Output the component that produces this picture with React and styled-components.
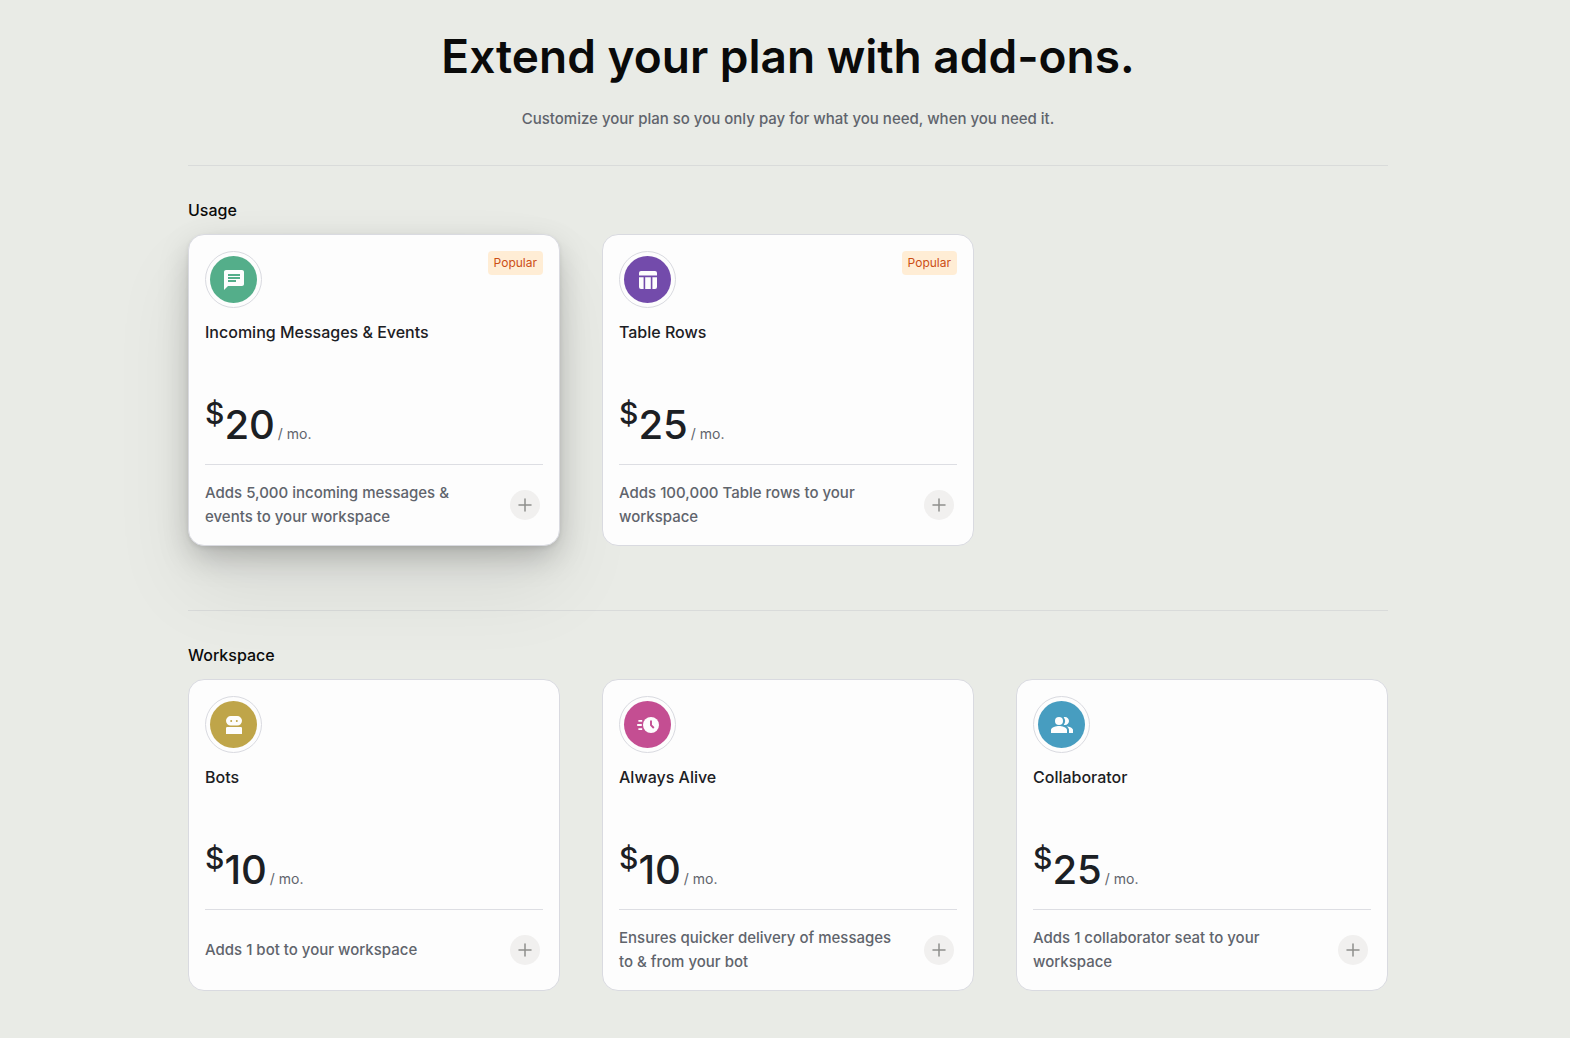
import React from 'react';
import styled, { createGlobalStyle } from 'styled-components';
import { MdChat, MdPeopleAlt } from 'react-icons/md';

const GlobalStyle = createGlobalStyle`
  *, *::before, *::after {
    box-sizing: border-box;
  }
  body {
    margin: 0;
    background: #e9ebe6;
    color: #0a0a0a;
    font-family: Inter, "Liberation Sans", sans-serif;
    font-size: 15px;
    line-height: 24px;
    -webkit-font-smoothing: antialiased;
  }
  h1, h2, h3, p, ul {
    margin: 0;
    padding: 0;
  }
`;

// ========== Icons ========================
const TableIcon = () => (
  <svg viewBox='0 0 24 24' width='24' height='24' fill='currentColor' aria-hidden='true'>
    <path d='M5 3h14a2 2 0 0 1 2 2v2.6H3V5a2 2 0 0 1 2-2z' />
    <path d='M3 9.3h4.6V21H5a2 2 0 0 1-2-2zM9.2 9.3h5.6V21H9.2zM16.4 9.3H21V19a2 2 0 0 1-2 2h-2.6z' />
  </svg>
);

const BotIcon = () => (
  <svg viewBox='0 0 24 24' width='24' height='24' fill='currentColor' aria-hidden='true'>
    <path
      fillRule='evenodd'
      d='M8.8 3h6.4a4.8 4.8 0 0 1 0 9.6H8.8a4.8 4.8 0 0 1 0-9.6zM9.2 6.9a1 1 0 1 0 0 2 1 1 0 0 0 0-2zm5.6 0a1 1 0 1 0 0 2 1 1 0 0 0 0-2z'
    />
    <path d='M5.2 14h13.6a1.2 1.2 0 0 1 1.2 1.2V21H4v-5.8A1.2 1.2 0 0 1 5.2 14z' />
  </svg>
);

const FastClockIcon = () => (
  <svg viewBox='0 0 24 24' width='24' height='24' aria-hidden='true'>
    <circle cx='15' cy='12' r='8' fill='currentColor' />
    <path d='M2.4 7.8h3.8M1.2 12h4.6M2.4 16.2h3.8' stroke='currentColor' strokeWidth='1.8' />
    <path d='M15 7.6v4.6l2.8 2.8' stroke='#c44e92' strokeWidth='1.9' fill='none' />
  </svg>
);

const PlusIcon = () => (
  <svg viewBox='0 0 14 14' width='14' height='14' aria-hidden='true'>
    <path d='M7 1v12M1 7h12' stroke='#8f8f8d' strokeWidth='1.5' strokeLinecap='round' />
  </svg>
);

const sections = [
  {
    title: 'Usage',
    addons: [
      { name: 'Incoming Messages & Events', price: 20, text: 'Adds 5,000 incoming messages & events to your workspace', color: '#54ae8a', icon: MdChat, popular: true, raised: true },
      { name: 'Table Rows', price: 25, text: 'Adds 100,000 Table rows to your workspace', color: '#734bab', icon: TableIcon, popular: true }
    ]
  },
  {
    title: 'Workspace',
    addons: [
      { name: 'Bots', price: 10, text: 'Adds 1 bot to your workspace', color: '#bfa549', icon: BotIcon },
      { name: 'Always Alive', price: 10, text: 'Ensures quicker delivery of messages to & from your bot', color: '#c44e92', icon: FastClockIcon },
      { name: 'Collaborator', price: 25, text: 'Adds 1 collaborator seat to your workspace', color: '#479dc0', icon: MdPeopleAlt }
    ]
  }
];

// ========== Basic Components =============
const Page = styled.main`
  max-width: 1254px;
  margin: 0 auto;
  padding: 24px 24px 48px 30px;
`;

const Header = styled.header`
  text-align: center;
  padding-bottom: 34px;
`;

const Title = styled.h1`
  font-size: 46px;
  line-height: 64px;
  font-weight: 600;
`;

const Subtitle = styled.p`
  margin-top: 19px;
  color: #60646c;
  font-weight: 500;
`;

const Section = styled.section`
  border-top: 1px solid #d9dbda;
  padding: 32px 0 64px;

  &:last-child {
    padding-bottom: 0;
  }
`;

const SectionTitle = styled.h2`
  font-size: 16px;
  font-weight: 500;
  margin-bottom: 12px;
`;

const CardGrid = styled.ul`
  display: grid;
  grid-template-columns: repeat(3, minmax(0, 1fr));
  gap: 42px;
  list-style: none;
`;

const Card = styled.li`
  display: flex;
  flex-direction: column;
  padding: 16px;
  border: 1px solid #d9dae0;
  border-radius: 16px;
  background: #fdfdfd;
  color: #1c2024;
  box-shadow: ${(props) => props.$raised
    ? '0 2px 4px rgba(0, 0, 0, 0.08), 0 12px 32px -4px rgba(0, 0, 0, 0.25), 0 40px 80px rgba(0, 0, 0, 0.08)'
    : 'none'};
`;

const CardTop = styled.div`
  display: flex;
  justify-content: space-between;
  align-items: flex-start;
`;

const IconRing = styled.div`
  display: flex;
  width: 57px;
  height: 57px;
  padding: 4px;
  border: 1px solid #d9dae0;
  border-radius: 50%;
`;

const IconDisc = styled.div`
  flex: 1;
  display: flex;
  align-items: center;
  justify-content: center;
  border-radius: 50%;
  background: ${(props) => props.$color};
  color: #fdfdfd;
  font-size: 24px;
`;

const Badge = styled.span`
  padding: 0 6px;
  border-radius: 4px;
  background: #ffedd5;
  color: #cc4e14;
  font-size: 12px;
`;

const CardTitle = styled.h3`
  margin-top: 12px;
  font-size: 16px;
  font-weight: 500;
`;

const Price = styled.p`
  margin: 61px 0 19px;
  font-size: 40px;
  line-height: 40px;
  font-weight: 500;
`;

const Currency = styled.sup`
  font-size: 30px;
  line-height: 0;
  vertical-align: 15px;
`;

const Period = styled.span`
  margin-left: 3px;
  color: #60646c;
  font-size: 14px;
  line-height: 14px;
  font-weight: 400;
`;

const CardFooter = styled.div`
  display: flex;
  align-items: center;
  justify-content: space-between;
  gap: 24px;
  min-height: 65px;
  padding: 16px 3px 0 0;
  border-top: 1px solid #dddee3;
`;

const Description = styled.p`
  color: #60646c;
  font-weight: 500;
`;

const AddButton = styled.button`
  flex: none;
  display: flex;
  align-items: center;
  justify-content: center;
  width: 30px;
  height: 30px;
  padding: 0;
  border: 0;
  border-radius: 50%;
  background: #f1f0ef;
  cursor: pointer;
`;

// ========== Compound Components ==========
const AddonCard = (props) => {
  const Icon = props.icon;
  return (
    <Card $raised={props.raised}>
      <CardTop>
        <IconRing>
          <IconDisc $color={props.color}><Icon /></IconDisc>
        </IconRing>
        {props.popular && <Badge>Popular</Badge>}
      </CardTop>
      <CardTitle>{props.name}</CardTitle>
      <Price>
        <Currency>$</Currency>{props.price}<Period>/ mo.</Period>
      </Price>
      <CardFooter>
        <Description>{props.text}</Description>
        <AddButton type='button' aria-label={`Add ${props.name}`}><PlusIcon /></AddButton>
      </CardFooter>
    </Card>
  );
};

export default function App() {
  return (
    <>
      <GlobalStyle />
      <Page>
        <Header>
          <Title>Extend your plan with add-ons.</Title>
          <Subtitle>Customize your plan so you only pay for what you need, when you need it.</Subtitle>
        </Header>
        {sections.map((section) => (
          <Section key={section.title}>
            <SectionTitle>{section.title}</SectionTitle>
            <CardGrid>
              {section.addons.map((addon) => <AddonCard key={addon.name} {...addon} />)}
            </CardGrid>
          </Section>
        ))}
      </Page>
    </>
  );
}
